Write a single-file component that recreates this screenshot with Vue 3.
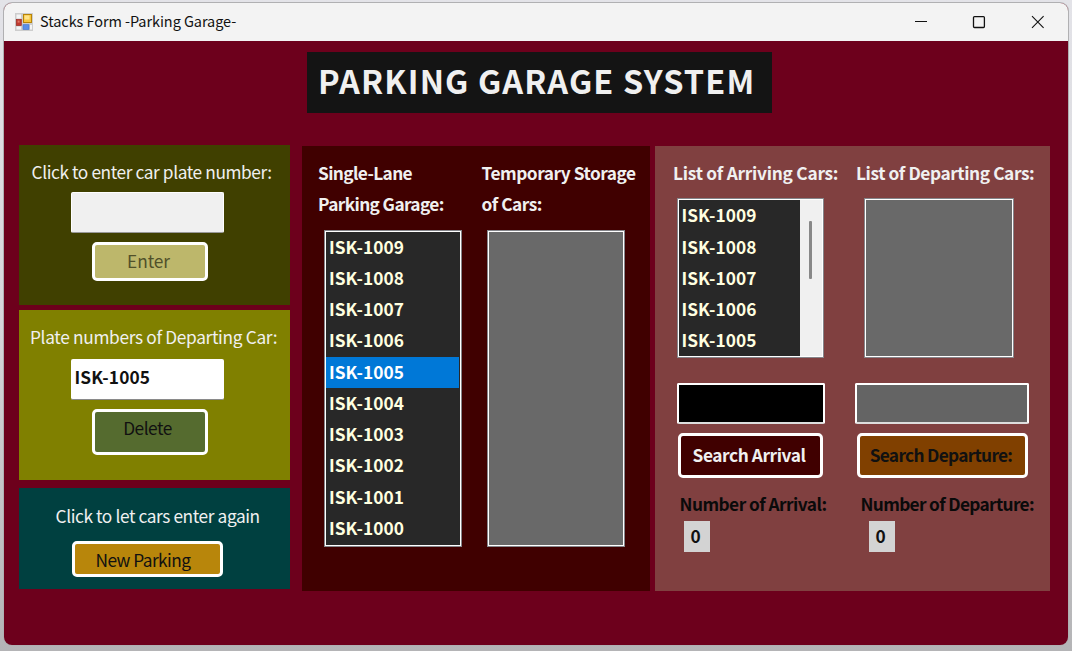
<script setup>
const garage = ['ISK-1009', 'ISK-1008', 'ISK-1007', 'ISK-1006', 'ISK-1005', 'ISK-1004', 'ISK-1003', 'ISK-1002', 'ISK-1001', 'ISK-1000']
const selected = 'ISK-1005'
const arrived = garage.slice(0, 5)
</script>

<template>
  <div class="desktop">
    <div class="window">
      <header class="titlebar">
        <svg class="app-icon" width="18" height="18" viewBox="0 0 18 18">
          <rect width="18" height="18" fill="#cdcdcd" />
          <rect x="1.5" y="1.5" width="4.5" height="4" fill="#f4f4f4" />
          <rect x="1.5" y="13.5" width="4.5" height="3" fill="#f4f4f4" />
          <rect x="15" y="12" width="2" height="4.5" fill="#f4f4f4" />
          <rect x="1.3" y="6.5" width="5" height="6" fill="#c03a30" stroke="#9c2820" stroke-width=".7" />
          <rect x="2.6" y="7.6" width="2" height="2" fill="#e07a68" />
          <rect x="8.5" y="1.5" width="8" height="8" fill="#f6c63c" stroke="#b88408" />
          <rect x="9.5" y="2.5" width="5" height="4" fill="#ffe48a" />
          <rect x="8" y="11.7" width="6" height="4.8" fill="#5a8fe8" stroke="#3f72cc" stroke-width=".6" />
        </svg>
        <span class="caption">Stacks Form -Parking Garage-</span>
        <svg class="controls" width="132" height="14" viewBox="0 0 132 14" fill="none" stroke="#111" stroke-width="1.1">
          <path d="M1 6.5h12" />
          <rect x="59.5" y="1.6" width="10.9" height="10.9" rx="1" stroke-width="1.3" />
          <path d="M118 1.2l11.6 11.6M129.6 1.2L118 12.8" />
        </svg>
      </header>
      <h1 class="banner">PARKING GARAGE SYSTEM</h1>
      <main class="board">
        <div class="forms">
          <section class="panel enter">
            <label class="l-enter">Click to enter car plate number:</label>
            <div class="field blank"></div>
            <button class="btn b-enter">Enter</button>
          </section>
          <section class="panel depart">
            <label class="l-depart">Plate numbers of Departing Car:</label>
            <div class="field">ISK-1005</div>
            <button class="btn b-delete">Delete</button>
          </section>
          <section class="panel again">
            <label class="l-again">Click to let cars enter again</label>
            <button class="btn b-new">New Parking</button>
          </section>
        </div>

        <section class="garage">
          <div>
            <h2 class="lane">Single-Lane<br />Parking Garage:</h2>
            <ul class="list tall dark">
              <li v-for="c in garage" :key="c" :class="{ on: c === selected }">{{ c }}</li>
            </ul>
          </div>
          <div>
            <h2 class="temporary">Temporary Storage<br />of Cars:</h2>
            <ul class="list tall"></ul>
          </div>
        </section>

        <section class="records">
          <div class="arrivals">
            <h2>List of Arriving Cars:</h2>
            <div class="list short dark scroller">
              <ul><li v-for="c in arrived" :key="c">{{ c }}</li></ul>
              <div class="track"><div class="thumb"></div></div>
            </div>
            <div class="query"></div>
            <button class="btn search">Search Arrival</button>
            <p>Number of Arrival:</p>
            <output>0</output>
          </div>
          <div class="departures">
            <h2>List of Departing Cars:</h2>
            <ul class="list short"></ul>
            <div class="query"></div>
            <button class="btn search">Search Departure:</button>
            <p>Number of Departure:</p>
            <output>0</output>
          </div>
        </section>
      </main>
    </div>
  </div>
</template>

<style>
body { margin: 0; }
</style>

<style scoped>
* { box-sizing: border-box; }
.desktop {
  width: 1072px; height: 651px; overflow: hidden; padding: 3px 4px 6px;
  background: linear-gradient(#e3e3e8, #d6d6da 50%, #b4b4b6);
  font: 17.3px/31.25px "Noto Sans CJK SC", "Noto Sans", sans-serif;
}
.window { height: 642px; border-radius: 8px; overflow: hidden; background: #6d001c; box-shadow: 0 0 0 1px #b0b0b2; }
.titlebar { height: 38px; background: #f3f3f3; display: flex; align-items: center; padding-left: 11px; color: #111; }
.caption { margin-left: 7px; font-size: 14.5px; flex: 1; line-height: 20px; margin-top: -2px; letter-spacing: -.07px; }
.controls { margin-right: 22px; }
.banner {
  width: 465px; height: 61px; margin: 11px 0 0 302.5px; padding-left: 11.5px; background: #141414; color: #f0f0f0;
  font-size: 32.5px; line-height: 56px; font-weight: 700; white-space: nowrap; letter-spacing: 1.15px;
}
.board { display: grid; grid-template-columns: 271px 349px 395px; column-gap: 5px; padding: 32px 0 0 15px; height: 478px; }
.forms { display: flex; flex-direction: column; }
.panel { display: flex; flex-direction: column; color: #f0f0f0; white-space: nowrap; }
.enter { height: 160px; background: #404000; }
.depart { height: 170px; margin-top: 5px; background: #808000; }
.again { height: 101px; margin-top: 8px; background: #004040; }
label { height: 31px; display: block; }
.l-enter { margin: 10.5px 0 0 12.5px; letter-spacing: -.4px; }
.l-depart { margin: 11px 0 0 11px; letter-spacing: -.33px; }
.l-again { margin: 12px 0 0 36.5px; letter-spacing: -.4px; }
.field {
  width: 153px; height: 41px; margin-left: 52px; background: #fff; border-radius: 2px;
  border-bottom: 1px solid #8a8a8a; color: #111; font-weight: 700; padding: 2px 0 0 3.5px; letter-spacing: .12px;
}
.field.blank { background: #f0f0f0; border: 1px solid #fff; border-bottom: 1px solid #999; margin-top: 5.5px; }
.depart .field { margin-top: 6.5px; }
.btn {
  display: block; border: 3px solid #fff; border-radius: 5px; margin: 0; padding: 0 0 2px; font: inherit; color: #111; white-space: nowrap;
}
.b-enter { width: 116px; height: 39px; margin: 9px 0 0 72.5px; padding-right: 2px; background: #bdb76b; color: #50502a; letter-spacing: -.1px; }
.b-delete { width: 116px; height: 46px; margin: 9px 0 0 72.5px; background: #556b2f; padding: 0 4px 14px 0; letter-spacing: -.5px; }
.b-new { width: 151px; height: 36px; margin: 10px 0 0 52.5px; background: #b8860b; padding-right: 8px; letter-spacing: -.55px; }
.garage {
  height: 445px; margin: 1px 0 0 7px; width: 348px; background: #400000; color: #f0f0f0;
  display: grid; grid-template-columns: 163px 160px; padding: 11px 0 0 16px; white-space: nowrap;
}
h2 { font-size: inherit; margin: 0; font-weight: 700; }
.lane { letter-spacing: -.62px; }
.temporary { letter-spacing: -.47px; padding-left: .5px; }
.list { list-style: none; margin: 0; padding: 1px; border: 1px solid #85858a; background: #696969; box-shadow: inset 0 0 0 1px #fff; color: #ffffe0; font-weight: 700; letter-spacing: .06px; }
.list.dark { background: #282828; }
.list li { height: 31.25px; line-height: 29.5px; padding-left: 3px; }
.tall { width: 138px; height: 317px; margin: 10px 0 0 6px; }
.list li.on { background: #0078d7; color: #fff; margin: 0 1px 0 0; }
.records {
  width: 395px; height: 445px; margin: 1px 0 0 6px; background: #804040; color: #f0f0f0;
  display: grid; grid-template-columns: 183px 195px; padding: 11px 0 0 17px; white-space: nowrap;
}
.records h2 { padding-left: 1px; letter-spacing: -.25px; }
.records .departures h2 { letter-spacing: -.41px; }
.short { width: 150px; height: 160px; margin: 10px 0 0 9px; }
.scroller { width: 147px; margin-left: 5px; display: flex; padding: 1px; }
.scroller ul { list-style: none; margin: 0; padding: 0; flex: 1; }
.scroller li { padding-left: 2.5px; }
.track { width: 22px; background: #f0f0f0; padding: 21px 0 0 9px; }
.thumb { width: 3px; height: 58px; background: #888; border-radius: 1px; }
.query { width: 148px; height: 41px; margin: 25px 0 0 4.5px; border: 2px solid #fff; border-bottom-color: #ddd; border-radius: 2px; background: #000; }
.departures .query { width: 174px; margin-left: 0; background: #646464; }
.search { width: 145px; height: 45px; margin: 9px 0 0 6px; font-weight: 700; background: #400000; color: #f0f0f0; letter-spacing: -.42px; padding-right: 3px; }
.departures .search { width: 171px; margin-left: 2px; background: #804000; color: #111; letter-spacing: -.7px; }
p { margin: 11px 0 0 7.5px; font-weight: 700; color: #0a0a0a; height: 31px; line-height: 30px; letter-spacing: -.53px; }
.departures p { margin-left: 5.5px; letter-spacing: -.66px; }
output { display: block; width: 26px; height: 31px; margin: 1px 0 0 12px; padding-left: 6.5px; background: #d3d3d3; color: #111; font-weight: 700; line-height: 30px; }
.departures output { margin-left: 14px; }
</style>
